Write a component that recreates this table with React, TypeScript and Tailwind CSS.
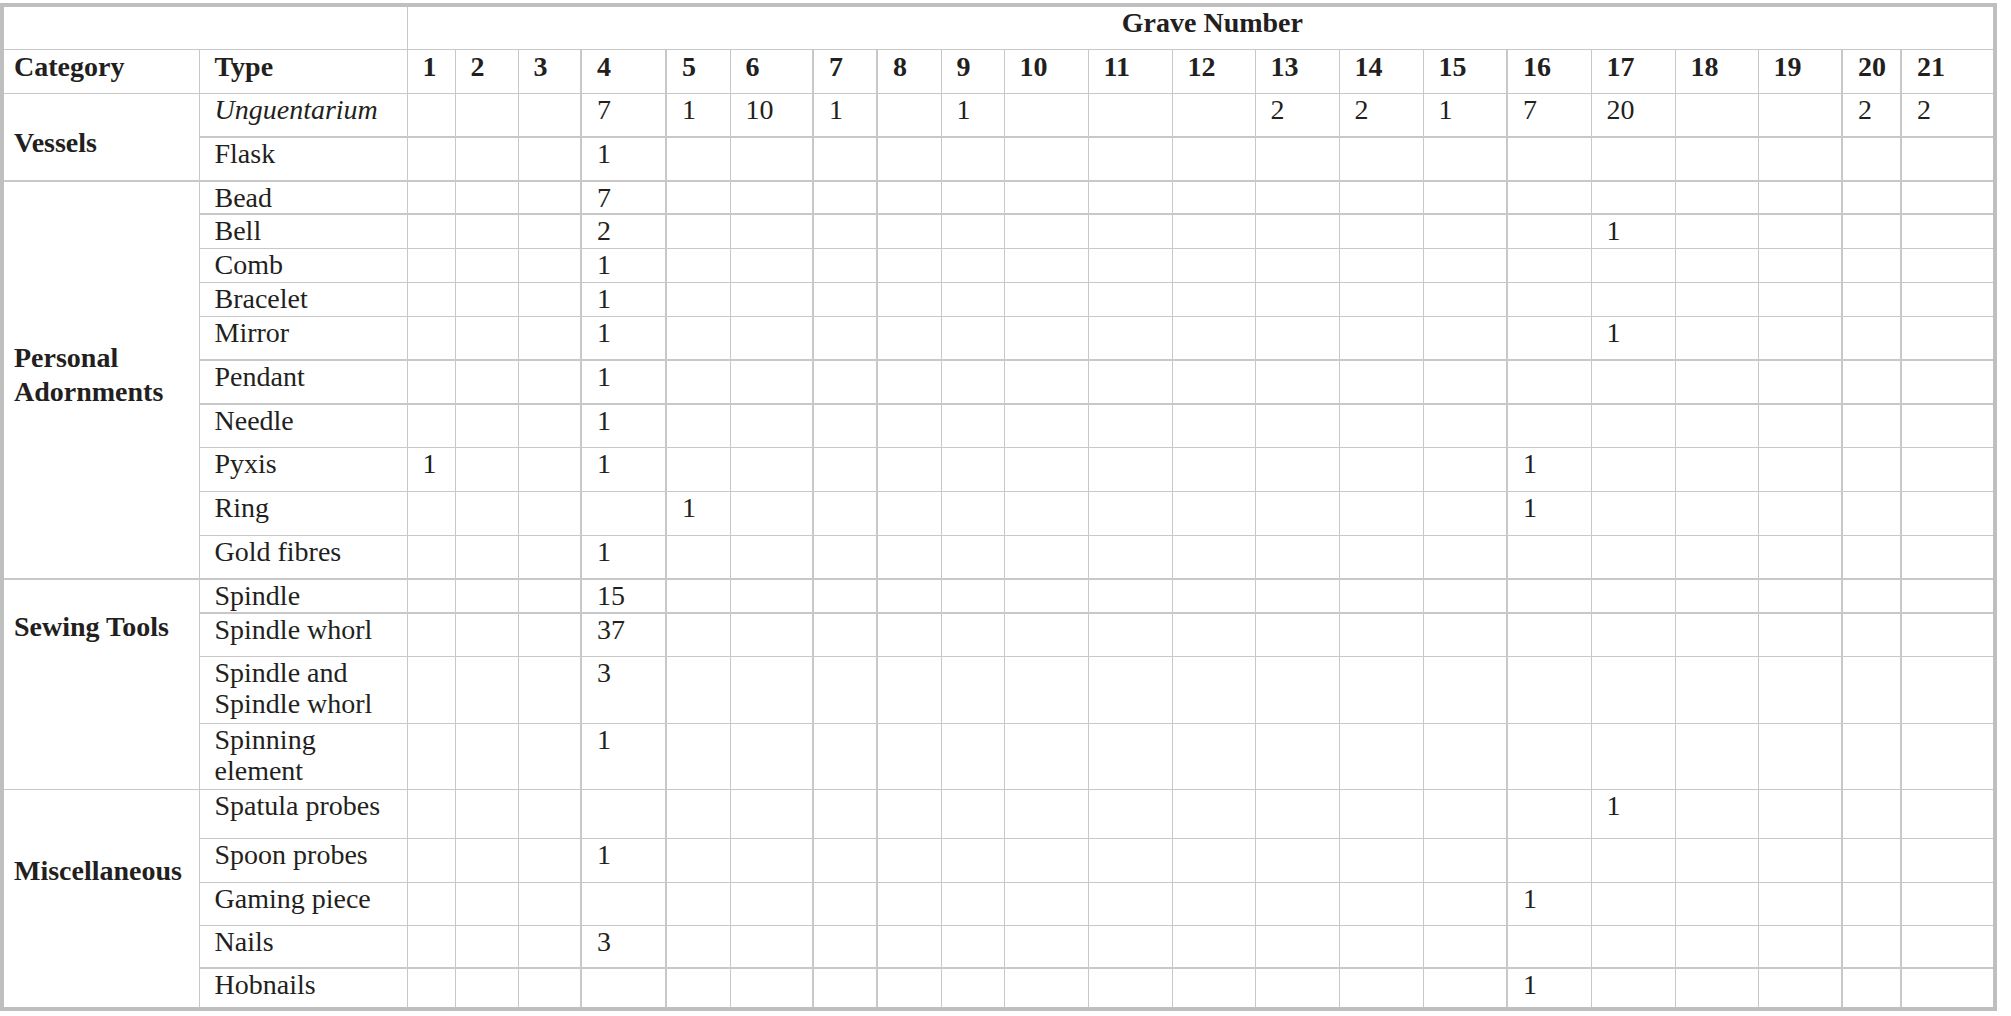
import React from 'react';

type Row = {
  type: string;
  lines?: string[];
  italic?: boolean;
  h: string;
  thick?: boolean;
  counts: Record<number, number>;
};

type Group = {
  name: string;
  pad: string;
  rows: Row[];
};

const colWidths = [
  'w-[195px]', 'w-[208px]',
  'w-[48px]', 'w-[63px]', 'w-[63px]', 'w-[85px]', 'w-[64px]', 'w-[83px]', 'w-[64px]',
  'w-[64px]', 'w-[63px]', 'w-[84px]', 'w-[84px]', 'w-[83px]', 'w-[84px]', 'w-[84px]',
  'w-[84px]', 'w-[84px]', 'w-[84px]', 'w-[83px]', 'w-[84px]', 'w-[59px]', 'w-[92px]',
];

const graves = Array.from({ length: 21 }, (_, i) => i + 1);

// columns whose left rule is drawn heavier in the source
const thickCols = new Set([4, 5, 7, 8, 16, 20, 21]);

const groups: Group[] = [
  {
    name: 'Vessels',
    pad: 'pt-[33px]',
    rows: [
      { type: 'Unguentarium', italic: true, h: 'h-[44px]', counts: { 4: 7, 5: 1, 6: 10, 7: 1, 9: 1, 13: 2, 14: 2, 15: 1, 16: 7, 17: 20, 20: 2, 21: 2 } },
      { type: 'Flask', h: 'h-[44px]', thick: true, counts: { 4: 1 } },
    ],
  },
  {
    name: 'Personal Adornments',
    pad: 'pt-[159px] leading-[34px]',
    rows: [
      { type: 'Bead', h: 'h-[33px]', thick: true, counts: { 4: 7 } },
      { type: 'Bell', h: 'h-[34px]', thick: true, counts: { 4: 2, 17: 1 } },
      { type: 'Comb', h: 'h-[34px]', counts: { 4: 1 } },
      { type: 'Bracelet', h: 'h-[34px]', counts: { 4: 1 } },
      { type: 'Mirror', h: 'h-[44px]', counts: { 4: 1, 17: 1 } },
      { type: 'Pendant', h: 'h-[44px]', thick: true, counts: { 4: 1 } },
      { type: 'Needle', h: 'h-[43px]', thick: true, counts: { 4: 1 } },
      { type: 'Pyxis', h: 'h-[44px]', counts: { 1: 1, 4: 1, 16: 1 } },
      { type: 'Ring', h: 'h-[44px]', counts: { 5: 1, 16: 1 } },
      { type: 'Gold fibres', h: 'h-[44px]', counts: { 4: 1 } },
    ],
  },
  {
    name: 'Sewing Tools',
    pad: 'pt-[31px]',
    rows: [
      { type: 'Spindle', h: 'h-[34px]', thick: true, counts: { 4: 15 } },
      { type: 'Spindle whorl', h: 'h-[43px]', thick: true, counts: { 4: 37 } },
      { type: 'Spindle and Spindle whorl', lines: ['Spindle and', 'Spindle whorl'], h: 'h-[67px]', counts: { 4: 3 } },
      { type: 'Spinning element', lines: ['Spinning', 'element'], h: 'h-[66px]', counts: { 4: 1 } },
    ],
  },
  {
    name: 'Miscellaneous',
    pad: 'pt-[65px]',
    rows: [
      { type: 'Spatula probes', h: 'h-[49px]', counts: { 17: 1 } },
      { type: 'Spoon probes', h: 'h-[44px]', counts: { 4: 1 } },
      { type: 'Gaming piece', h: 'h-[43px]', counts: { 16: 1 } },
      { type: 'Nails', h: 'h-[43px]', counts: { 4: 3 } },
      { type: 'Hobnails', h: 'h-[39px]', thick: true, counts: { 16: 1 } },
    ],
  },
];

const line = 'border border-[#c8c8c8]';

const cellCls = (col: number, thickRow?: boolean) =>
  `${line} align-top pl-[15px] pr-0 pt-0 ${thickCols.has(col) ? 'border-l-2' : ''} ${thickRow ? 'border-t-2' : ''}`;

export default function App() {
  return (
    <div className="min-h-screen bg-white pt-[3px]">
      <div className="w-[1997px] border-4 border-[#bfbfbf] bg-white">
        <table
          className="table-fixed w-[1989px] border-collapse border-hidden text-[28px] leading-[31px] text-[#231f20]"
          style={{ fontFamily: '"Liberation Serif", "Times New Roman", serif' }}
        >
          <colgroup>
            {colWidths.map((w, i) => (
              <col key={i} className={w} />
            ))}
          </colgroup>
          <thead>
            <tr className="h-[42px]">
              <th colSpan={2} className={line}></th>
              <th colSpan={21} className={`${line} align-top pt-0 pl-[24px] text-center font-bold`}>
                Grave Number
              </th>
            </tr>
            <tr className="h-[44px]">
              <th className={`${line} align-top pt-px pl-[10px] text-left font-bold`}>Category</th>
              <th className={`${line} align-top pt-px pl-[15px] text-left font-bold`}>Type</th>
              {graves.map((g) => (
                <th key={g} className={`${cellCls(g)} pt-px text-left font-bold`}>
                  {g}
                </th>
              ))}
            </tr>
          </thead>
          <tbody>
            {groups.map((grp) =>
              grp.rows.map((row, ri) => (
                <tr key={row.type} className={row.h}>
                  {ri === 0 && (
                    <td
                      rowSpan={grp.rows.length}
                      className={`${line} align-top pl-[10px] pr-0 font-bold ${grp.pad} ${row.thick ? 'border-t-2' : ''}`}
                    >
                      {grp.name}
                    </td>
                  )}
                  <td className={`${line} align-top pl-[15px] pr-0 pt-0 ${row.thick ? 'border-t-2' : ''} ${row.italic ? 'italic' : ''}`}>
                    {row.lines
                      ? row.lines.map((l, i) => (
                          <div key={i}>{l}</div>
                        ))
                      : row.type}
                  </td>
                  {graves.map((g) => (
                    <td key={g} className={cellCls(g, row.thick)}>
                      {row.counts[g] ?? ''}
                    </td>
                  ))}
                </tr>
              ))
            )}
          </tbody>
        </table>
      </div>
    </div>
  );
}
